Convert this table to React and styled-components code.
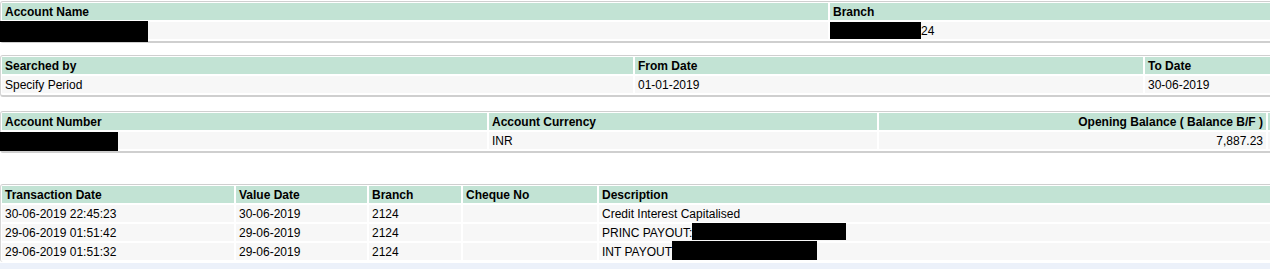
import React from "react";
import styled, { createGlobalStyle } from "styled-components";

const Global = createGlobalStyle`
  html, body {
    margin: 0;
    padding: 0;
    background: #ffffff;
    overflow: hidden;
  }
  body {
    font-family: "Liberation Sans", Arial, sans-serif;
    font-size: 12px;
    color: #000;
  }
`;

const Page = styled.div`
  width: 1270px;
  padding-top: 1px;
`;

const Panel = styled.div`
  width: 1300px;
  border-top: 1px solid #cfcfcf;
  border-bottom: ${props => (props.open ? "none" : "2px solid #cfcfcf")};
  border-left: 1px solid #d6d6d6;
  border-radius: 3px 0 0 3px;
  margin-bottom: ${props => props.gap ?? 12}px;
`;

const Table = styled.table`
  width: 100%;
  table-layout: fixed;
  border-collapse: separate;
  border-spacing: 2px;
  margin: -1px 0 0 -1px;
`;

const Head = styled.th`
  background: #c2e3d4;
  height: 17px;
  padding: 0 3px;
  line-height: 14px;
  font-weight: bold;
  font-size: 12px;
  text-align: ${props => props.align || "left"};
  white-space: nowrap;
  overflow: hidden;
`;

const Cell = styled.td`
  background: #f7f7f7;
  height: 17px;
  padding: 0 ${props => (props.flush ? 0 : 3)}px;
  line-height: 14px;
  font-size: 12px;
  text-align: ${props => props.align || "left"};
  white-space: nowrap;
  overflow: visible;
  vertical-align: middle;
`;

const Redact = styled.span`
  display: inline-block;
  vertical-align: top;
  background: #000;
  width: ${props => props.w}px;
  height: ${props => props.h}px;
  margin-left: ${props => props.ml || 0}px;
  margin-top: ${props => props.mt}px;
  margin-bottom: ${props => 14 - props.h - props.mt}px;
`;

const Footer = styled.div`
  height: 8px;
  background: #ecf1fa;
  margin-top: 1px;
`;

const transactions = [
  ["30-06-2019 22:45:23", "30-06-2019", "2124", "", "Credit Interest Capitalised", null],
  ["29-06-2019 01:51:42", "29-06-2019", "2124", "", "PRINC PAYOUT:", { w: 154, h: 17, mt: -3 }],
  ["29-06-2019 01:51:32", "29-06-2019", "2124", "", "INT PAYOUT", { w: 145, h: 19, mt: -4 }],
];

export default function App() {
  return (
    <Page>
      <Global />
      <Panel gap={12}>
        <Table>
          <colgroup>
            <col style={{ width: 826 }} />
            <col />
          </colgroup>
          <thead>
            <tr>
              <Head>Account Name</Head>
              <Head>Branch</Head>
            </tr>
          </thead>
          <tbody>
            <tr>
              <Cell flush>
                <Redact w={149} h={21} mt={-3} ml={-3} />
              </Cell>
              <Cell flush>
                <Redact w={91} h={17} mt={-2} />
                24
              </Cell>
            </tr>
          </tbody>
        </Table>
      </Panel>

      <Panel gap={14}>
        <Table>
          <colgroup>
            <col style={{ width: 631 }} />
            <col style={{ width: 508 }} />
            <col />
          </colgroup>
          <thead>
            <tr>
              <Head>Searched by</Head>
              <Head>From Date</Head>
              <Head>To Date</Head>
            </tr>
          </thead>
          <tbody>
            <tr>
              <Cell>Specify Period</Cell>
              <Cell>01-01-2019</Cell>
              <Cell>30-06-2019</Cell>
            </tr>
          </tbody>
        </Table>
      </Panel>

      <Panel gap={31}>
        <Table>
          <colgroup>
            <col style={{ width: 485 }} />
            <col style={{ width: 388 }} />
            <col style={{ width: 387 }} />
            <col />
          </colgroup>
          <thead>
            <tr>
              <Head>Account Number</Head>
              <Head>Account Currency</Head>
              <Head align="right">Opening Balance ( Balance B/F )</Head>
              <Head />
            </tr>
          </thead>
          <tbody>
            <tr>
              <Cell flush>
                <Redact w={119} h={19} mt={-2} ml={-3} />
              </Cell>
              <Cell>INR</Cell>
              <Cell align="right">7,887.23</Cell>
              <Cell />
            </tr>
          </tbody>
        </Table>
      </Panel>

      <Panel gap={0} open>
        <Table>
          <colgroup>
            <col style={{ width: 232 }} />
            <col style={{ width: 131 }} />
            <col style={{ width: 92 }} />
            <col style={{ width: 134 }} />
            <col />
          </colgroup>
          <thead>
            <tr>
              <Head>Transaction Date</Head>
              <Head>Value Date</Head>
              <Head>Branch</Head>
              <Head>Cheque No</Head>
              <Head>Description</Head>
            </tr>
          </thead>
          <tbody>
            {transactions.map((t, i) => (
              <tr key={i}>
                <Cell>{t[0]}</Cell>
                <Cell>{t[1]}</Cell>
                <Cell>{t[2]}</Cell>
                <Cell>{t[3]}</Cell>
                <Cell>
                  {t[4]}
                  {t[5] && <Redact w={t[5].w} h={t[5].h} mt={t[5].mt} />}
                </Cell>
              </tr>
            ))}
          </tbody>
        </Table>
      </Panel>
      <Footer />
    </Page>
  );
}
